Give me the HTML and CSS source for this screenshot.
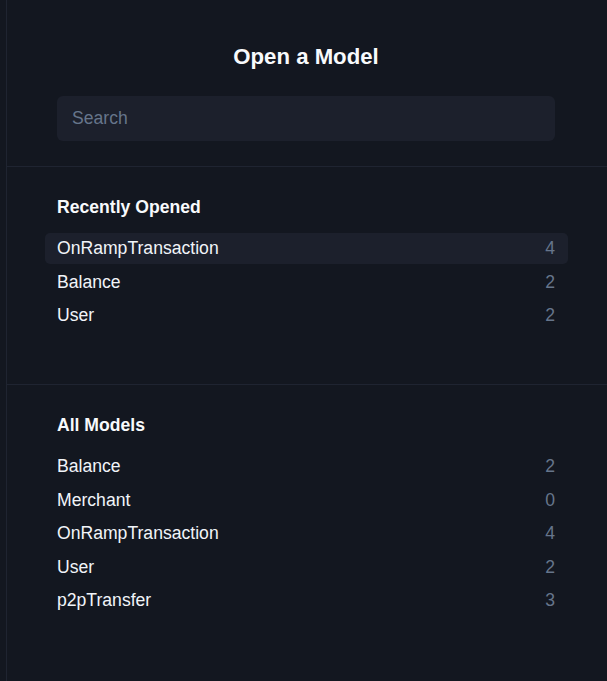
FILE: index.html
```html
<!DOCTYPE html>
<html lang="en">
<head>
<meta charset="utf-8">
<title>Open a Model</title>
<link rel="stylesheet" href="styles.css">
</head>
<body>
<div class="panel">
  <header class="header">
    <h1 class="title">Open a Model</h1>
    <input class="search" type="text" placeholder="Search">
  </header>
  <section class="section section-recent">
    <h2 class="section-title">Recently Opened</h2>
    <ul class="list">
      <li class="row row-active"><span class="name">OnRampTransaction</span><span class="count">4</span></li>
      <li class="row"><span class="name">Balance</span><span class="count">2</span></li>
      <li class="row"><span class="name">User</span><span class="count">2</span></li>
    </ul>
  </section>
  <section class="section">
    <h2 class="section-title">All Models</h2>
    <ul class="list">
      <li class="row"><span class="name">Balance</span><span class="count">2</span></li>
      <li class="row"><span class="name">Merchant</span><span class="count">0</span></li>
      <li class="row"><span class="name">OnRampTransaction</span><span class="count">4</span></li>
      <li class="row"><span class="name">User</span><span class="count">2</span></li>
      <li class="row"><span class="name">p2pTransfer</span><span class="count">3</span></li>
    </ul>
  </section>
</div>
</body>
</html>
```

FILE: styles.css
```css
html, body {
  margin: 0;
  padding: 0;
  background: #131720;
}

body {
  font-family: "Liberation Sans", Arial, sans-serif;
  color: #f3f6fb;
  height: 681px;
  overflow: hidden;
}

.panel {
  margin-left: 6px;
  border-left: 1px solid #1f2431;
  min-height: 681px;
}

.header {
  padding: 44px 52px 25px 50px;
  text-align: center;
}

.title {
  margin: 0 0 26px;
  font-size: 22.2px;
  line-height: 26px;
  font-weight: 700;
  color: #f8fafc;
}

.search {
  display: block;
  width: 100%;
  box-sizing: border-box;
  height: 45px;
  padding: 0 15px;
  border: none;
  border-radius: 6px;
  background: #1c202c;
  color: #e2e8f0;
  font-family: "Liberation Sans", Arial, sans-serif;
  font-size: 17.6px;
  outline: none;
}

.search::placeholder {
  color: #66758b;
}

.section {
  border-top: 1px solid #1f2431;
  padding: 29px 52px 0 50px;
}

.section-recent {
  padding-bottom: 53px;
}

.section-title {
  margin: 0 0 15px;
  font-size: 17.6px;
  line-height: 22px;
  font-weight: 700;
  color: #f8fafc;
}

.list {
  list-style: none;
  margin: 0 -13px 0 -12px;
  padding: 0;
  display: flex;
  flex-direction: column;
  gap: 2.5px;
}

.row {
  display: flex;
  justify-content: space-between;
  align-items: center;
  height: 31px;
  line-height: 31px;
  padding: 0 13px 0 12px;
  border-radius: 5px;
  font-size: 17.6px;
}

.row-active {
  background: #1c202c;
}

.name {
  color: #f1f4f9;
}

.count {
  color: #66758b;
}
```
